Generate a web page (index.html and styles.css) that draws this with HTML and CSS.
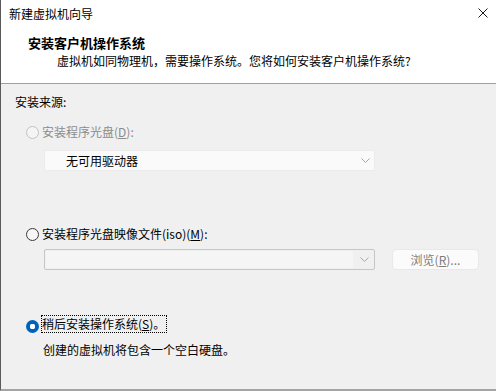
FILE: index.html
```html
<!DOCTYPE html>
<html lang="zh-CN">
<head>
<meta charset="utf-8">
<title>新建虚拟机向导</title>
<link rel="stylesheet" href="styles.css">
</head>
<body>
<div class="window">
  <div class="header">
    <div class="titlebar">
      <span class="title">新建虚拟机向导</span>
      <svg class="close" width="10" height="10" viewBox="0 0 10 10"><path d="M0.5 0.5L9.5 9.5M9.5 0.5L0.5 9.5" stroke="#1a1a1a" stroke-width="1" fill="none"/></svg>
    </div>
    <div class="h-title">安装客户机操作系统</div>
    <div class="h-sub">虚拟机如同物理机，需要操作系统。您将如何安装客户机操作系统?</div>
  </div>
  <div class="content">
    <div class="group-label">安装来源:</div>
    <div class="option opt1 disabled"><span class="radio"></span><span class="label">安装程序光盘(<u>D</u>):</span></div>
    <div class="combo combo-drive"><span class="combo-text">无可用驱动器</span><svg class="chev" width="9" height="5" viewBox="0 0 9 5"><path d="M0.5 0.5L4.5 4.5L8.5 0.5" stroke="#a8a8a8" stroke-width="1" fill="none"/></svg></div>
    <div class="option opt2"><span class="radio"></span><span class="label">安装程序光盘映像文件(iso)(<u>M</u>):</span></div>
    <div class="file-row">
      <div class="combo combo-iso"><span class="combo-field"></span><svg class="chev" width="9" height="5" viewBox="0 0 9 5"><path d="M0.5 0.5L4.5 4.5L8.5 0.5" stroke="#a8a8a8" stroke-width="1" fill="none"/></svg></div>
      <div class="browse">浏览(<u>R</u>)...</div>
    </div>
    <div class="option opt3"><span class="radio checked"></span><span class="label focus">稍后安装操作系统(<u>S</u>)。</span></div>
    <div class="desc">创建的虚拟机将包含一个空白硬盘。</div>
  </div>
</div>
</body>
</html>
```
FILE: styles.css
```css
* { box-sizing: border-box; }
html, body { margin: 0; padding: 0; background: #f0f0f0; }
body {
  font-family: "Noto Sans CJK SC", "Microsoft YaHei", sans-serif;
  font-size: 12px;
  color: #000;
}
.window {
  width: 496px;
  height: 391px;
  border-left: 1px solid #5a5a5a;
  border-bottom: 2px solid #a4a4a4;
  background: #f0f0f0;
  display: flex;
  flex-direction: column;
}
.header {
  background: #fff;
  border-bottom: 1px solid #a0a0a0;
  padding-bottom: 13px;
}
.titlebar {
  height: 28px;
  display: flex;
  align-items: center;
  justify-content: space-between;
  padding: 0 8px 0 8px;
}
.title { line-height: 28px; }
.close { display: block; margin-top: -2px; }
.h-title {
  margin-top: 6px;
  line-height: 18px;
  padding-left: 27px;
  font-size: 13px;
  font-weight: bold;
}
.h-sub {
  line-height: 18px;
  padding-left: 56px;
}
.content {
  flex: 1;
  display: flex;
  flex-direction: column;
}
.group-label {
  margin-top: 8px;
  line-height: 20px;
  padding-left: 14px;
}
.option {
  display: flex;
  align-items: center;
  height: 20px;
  padding-left: 25px;
}
.opt1 { margin-top: 10px; }
.opt2 { margin-top: 53px; }
.opt3 {
  margin-top: 45px;
  height: 18px;
  align-items: flex-end;
}
.radio {
  width: 13px;
  height: 13px;
  border-radius: 50%;
  border: 1px solid #3a3a3a;
  background: #f6f6f6;
  flex: none;
}
.disabled .radio { border-color: #c2c2c2; background: #f4f4f4; }
.disabled .label { color: #8c8c8c; }
.radio.checked {
  border: none;
  background: radial-gradient(circle, #fff 0 2.6px, #0062b8 3px);
}
.label { margin-left: 3px; line-height: 20px; }
.label.focus {
  margin-left: 2px;
  line-height: 16px;
  border: 1px dotted #000;
  padding-right: 1px;
}
u { text-decoration: underline; text-underline-offset: 1px; }
.combo {
  display: flex;
  align-items: center;
  height: 21px;
  width: 331px;
  margin-left: 43px;
  position: relative;
}
.combo-drive {
  margin-top: 8px;
  background: #fafafa;
  border: 1px solid #ececec;
  border-radius: 2px;
}
.combo-text { padding-left: 21px; flex: 1; line-height: 19px; }
.chev { display: block; margin-right: 4px; flex: none; }
.file-row {
  margin-top: 5px;
  display: flex;
  align-items: center;
}
.combo-iso {
  background: #f0f0f0;
  border: 1px solid #c6c6c6;
  border-radius: 2px;
  padding: 1px;
}
.combo-iso .combo-field {
  flex: 1;
  height: 17px;
  background: #f5f5f5;
  margin-right: 7px;
}
.browse {
  margin-left: 17px;
  width: 87px;
  height: 21px;
  background: #fbfbfb;
  border: 1px solid #e8e8e8;
  border-radius: 4px;
  color: #7c7c7c;
  text-align: center;
  line-height: 19px;
}
.desc {
  margin-top: 7px;
  line-height: 20px;
  padding-left: 42px;
}
```
